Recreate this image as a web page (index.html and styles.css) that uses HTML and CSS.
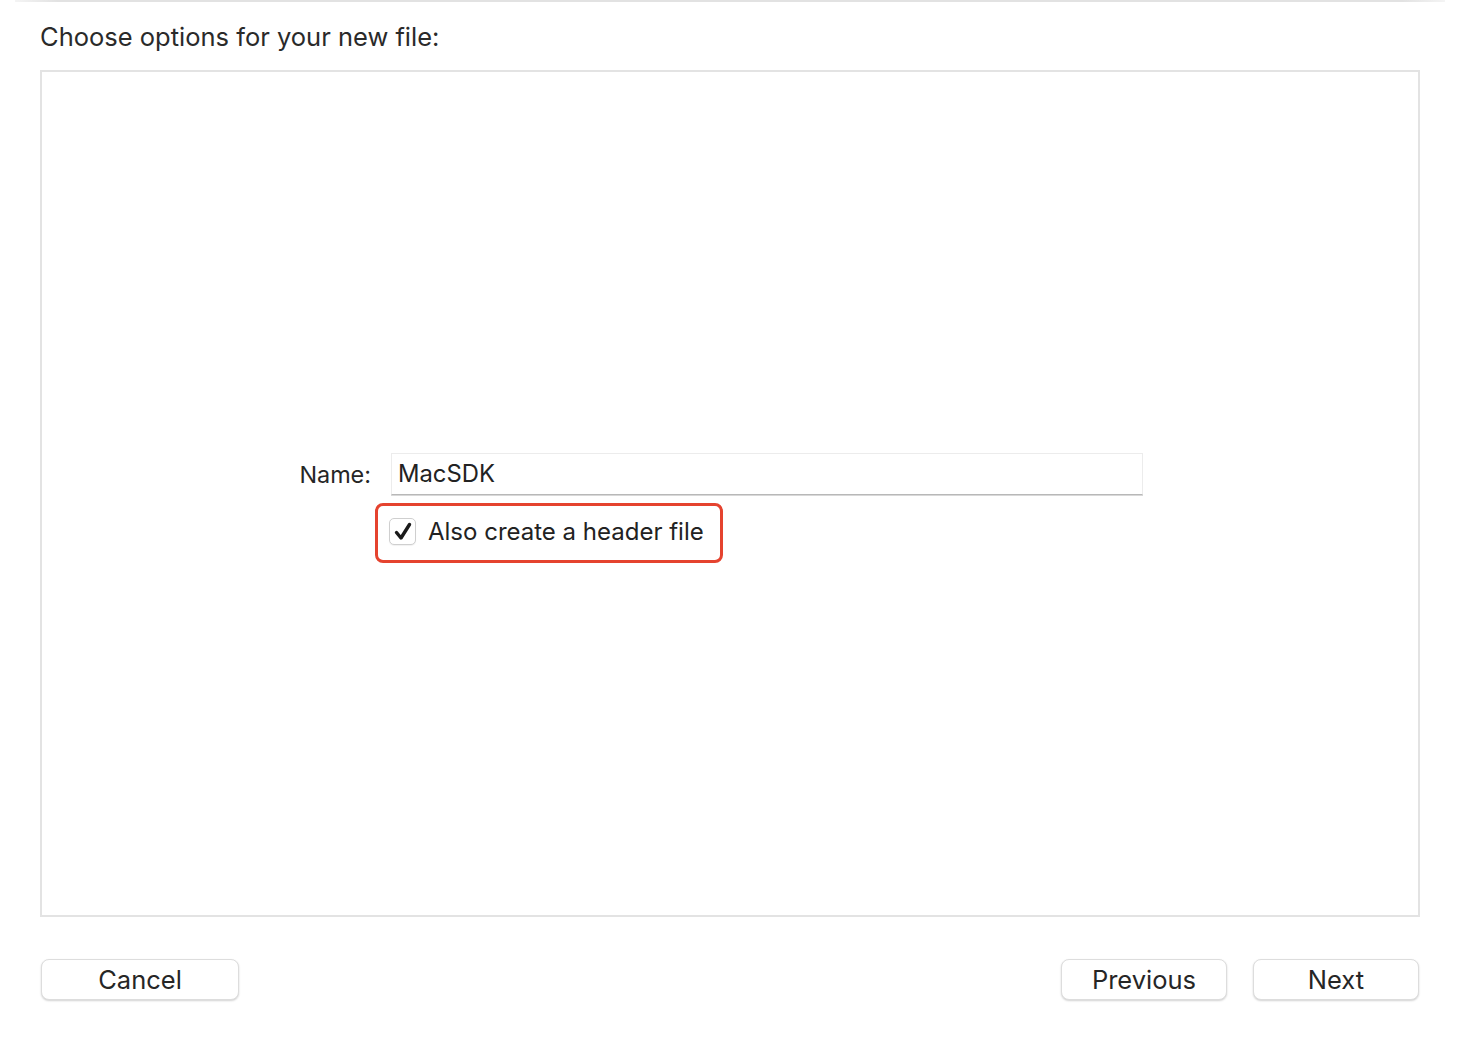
FILE: index.html
```html
<!DOCTYPE html>
<html>
<head>
<meta charset="utf-8">
<link rel="stylesheet" href="styles.css">
</head>
<body>
<div class="sheet">
  <div class="topline"></div>
  <h1 class="title">Choose options for your new file:</h1>
  <div class="panel">
    <div class="form">
      <div class="row">
        <label class="label">Name:</label>
        <div class="field">MacSDK</div>
      </div>
      <div class="row row-check">
        <div class="highlight">
          <span class="checkbox">
            <svg width="22" height="22" viewBox="0 0 22 22"><path d="M4.5 11.5 L9 17 L17.5 3.5" fill="none" stroke="#1a1a1a" stroke-width="3.4" stroke-linecap="round" stroke-linejoin="round"/></svg>
          </span>
          <span class="check-label">Also create a header file</span>
        </div>
      </div>
    </div>
  </div>
  <div class="footer">
    <button class="btn btn-cancel">Cancel</button>
    <div class="right">
      <button class="btn btn-prev">Previous</button>
      <button class="btn btn-next">Next</button>
    </div>
  </div>
</div>
</body>
</html>
```
FILE: styles.css
```css
html, body {
  margin: 0;
  padding: 0;
  background: #ffffff;
}
body {
  width: 1460px;
  height: 1040px;
  overflow: hidden;
  font-family: Inter, "Liberation Sans", Arial, sans-serif;
  color: #262626;
}
.sheet {
  display: flex;
  flex-direction: column;
  height: 1040px;
}
.topline {
  height: 2px;
  margin: 0 15px;
  background: linear-gradient(to right, #f4f4f4, #e2e2e2 3%, #e2e2e2 97%, #f4f4f4);
}
.title {
  margin: 20px 0 0 40px;
  font-size: 25.5px;
  font-weight: normal;
  line-height: 30px;
  height: 30px;
  color: #2a2a2a;
}
.panel {
  margin: 18px 0 0 40px;
  width: 1376px;
  height: 843px;
  border: 2px solid #e3e3e3;
  background: #ffffff;
}
.form {
  padding-top: 381px;
}
.row {
  display: flex;
  align-items: center;
}
.label {
  width: 329px;
  text-align: right;
  font-size: 23.4px;
  color: #262626;
}
.field {
  margin-left: 20px;
  width: 744px;
  height: 40px;
  border: 1px solid #ececec;
  border-bottom: 1px solid #b8b8b8;
  box-shadow: 0 1px 0 #d8d8d8;
  font-size: 23.8px;
  line-height: 40px;
  padding-left: 6px;
  color: #222;
}
.row-check {
  margin-top: 8px;
  padding-left: 333px;
}
.highlight {
  display: flex;
  align-items: center;
  width: 348px;
  height: 60px;
  border: 3px solid #e5432f;
  border-radius: 8px;
  box-sizing: border-box;
}
.checkbox {
  margin-left: 11px;
  margin-top: -3px;
  width: 27px;
  height: 27px;
  border: 1px solid #cfcfcf;
  border-radius: 5px;
  box-sizing: border-box;
  display: flex;
  align-items: center;
  justify-content: center;
  background: #fff;
  box-shadow: 0 1px 1px rgba(0,0,0,0.06);
}
.check-label {
  margin-left: 12px;
  margin-top: -3px;
  font-size: 24px;
  color: #222;
  white-space: nowrap;
}
.footer {
  display: flex;
  justify-content: space-between;
  margin: 42px 41px 0 41px;
}
.right {
  display: flex;
  gap: 26px;
}
.btn {
  height: 41px;
  background: #ffffff;
  border: 1px solid #dddddd;
  border-radius: 8px;
  box-shadow: 0 1px 2px rgba(0,0,0,0.18);
  font-family: Inter, "Liberation Sans", Arial, sans-serif;
  font-size: 25.5px;
  color: #262626;
  padding: 0;
}
.btn-cancel { width: 198px; }
.btn-prev { width: 166px; }
.btn-next { width: 166px; }
```
